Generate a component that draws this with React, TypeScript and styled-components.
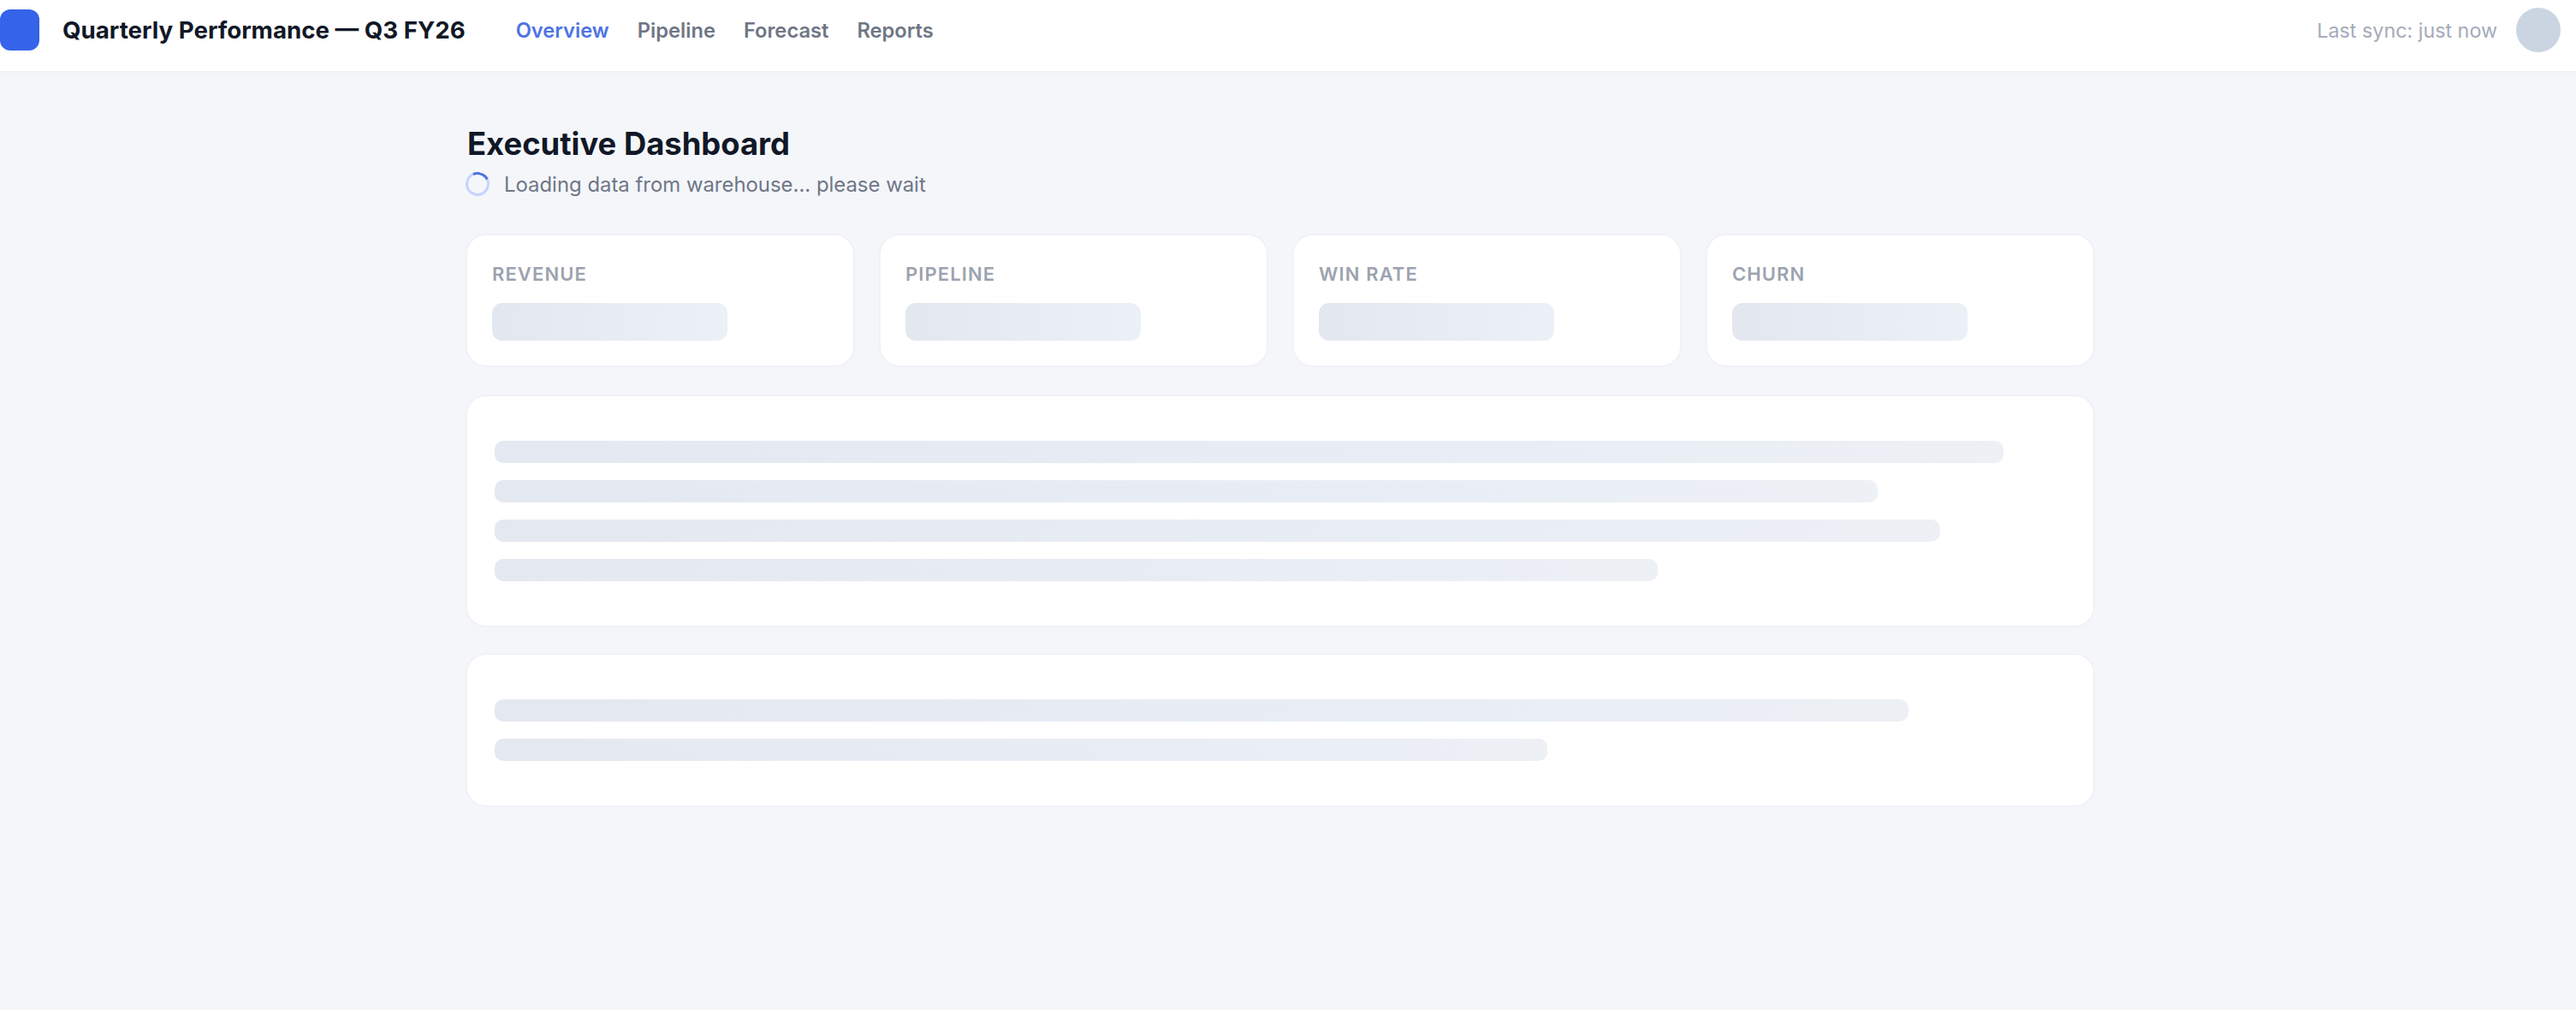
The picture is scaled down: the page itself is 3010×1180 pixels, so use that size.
import React from "react";
import styled, { createGlobalStyle } from "styled-components";

const Global = createGlobalStyle`
  html, body { margin: 0; padding: 0; background: #f4f6fa; }
  body { font-family: Inter, "Noto Sans", sans-serif; height: 1180px; overflow: hidden; }
`;

const Header = styled.header`
  display: flex;
  align-items: center;
  height: 83px;
  padding-right: 18px;
  background: #ffffff;
  border-bottom: 2px solid #f0f2f7;
`;

const Logo = styled.div`
  width: 46px;
  height: 48px;
  margin-top: -13px;
  border-radius: 12px;
  background: #3563e9;
  flex: none;
`;

const Title = styled.div`
  margin-left: 27px;
  margin-top: -13px;
  font-size: 27.7px;
  font-weight: 700;
  color: #111827;
  white-space: nowrap;
`;

const Nav = styled.nav`
  display: flex;
  gap: 33px;
  margin-left: 59px;
  margin-top: -13px;
`;

const NavLink = styled.span<{ $active?: boolean }>`
  font-size: 23.7px;
  font-weight: 600;
  color: ${(p) => (p.$active ? "#4f73e3" : "#6f7686")};
`;

const HeaderRight = styled.div`
  margin-left: auto;
  display: flex;
  align-items: center;
  gap: 22px;
  margin-top: -13px;
`;

const SyncText = styled.span`
  font-size: 23.3px;
  color: #a4abb9;
`;

const Avatar = styled.div`
  width: 52px;
  height: 52px;
  border-radius: 50%;
  background: #cbd5e1;
`;

const Main = styled.main`
  box-sizing: border-box;
  width: 1904px;
  margin-left: 544px;
  padding-top: 60px;
`;

const Heading = styled.h1`
  margin: 0 0 0 2px;
  font-size: 36.4px;
  line-height: 46px;
  font-weight: 700;
  color: #111827;
`;

const Status = styled.div`
  display: flex;
  align-items: center;
  gap: 17px;
  margin-top: 8px;
  height: 32px;
  font-size: 23.9px;
  color: #6f7686;
`;

const Spinner = styled.div`
  box-sizing: border-box;
  width: 28px;
  height: 28px;
  border-radius: 50%;
  border: 3px solid #c7d2fe;
  border-top-color: #4f73e3;
  transform: rotate(20deg);
`;

const Stats = styled.div`
  display: grid;
  grid-template-columns: repeat(4, 1fr);
  gap: 28px;
  margin-top: 42px;
`;

const Card = styled.section`
  box-sizing: border-box;
  background: #ffffff;
  border: 2px solid #f0f2f7;
  border-radius: 24px;
`;

const StatCard = styled(Card)`
  height: 156px;
  padding: 32px 29px 0;
`;

const StatLabel = styled.div`
  font-size: 22px;
  line-height: 26px;
  font-weight: 600;
  letter-spacing: 1.1px;
  color: #9ca3af;
`;

const StatBar = styled.div`
  width: 275px;
  height: 44px;
  margin-top: 21px;
  border-radius: 12px;
  background: linear-gradient(90deg, #e3e7ef, #ecf0f7);
`;

const Panel = styled(Card)<{ $gapTop: number }>`
  margin-top: ${(p) => p.$gapTop}px;
  padding: 52px 32px 52px;
  display: flex;
  flex-direction: column;
  gap: 20px;
`;

const Row = styled.div`
  height: 26px;
  border-radius: 10px;
  background: linear-gradient(90deg, #e4e8f0, #e9eef6 70%, #edf0f5);
`;

const stats = ["REVENUE", "PIPELINE", "WIN RATE", "CHURN"];
const navItems = ["Overview", "Pipeline", "Forecast", "Reports"];

export default function App() {
  return (
    <>
      <Global />
      <Header>
        <Logo />
        <Title>Quarterly Performance — Q3 FY26</Title>
        <Nav>
          {navItems.map((n, i) => (
            <NavLink key={n} $active={i === 0}>{n}</NavLink>
          ))}
        </Nav>
        <HeaderRight>
          <SyncText>Last sync: just now</SyncText>
          <Avatar />
        </HeaderRight>
      </Header>
      <Main>
        <Heading>Executive Dashboard</Heading>
        <Status>
          <Spinner />
          Loading data from warehouse... please wait
        </Status>
        <Stats>
          {stats.map((s) => (
            <StatCard key={s}>
              <StatLabel>{s}</StatLabel>
              <StatBar />
            </StatCard>
          ))}
        </Stats>
        <Panel $gapTop={32}>
          {[96, 88, 92, 74].map((w) => (
            <Row key={w} style={{ width: `${w}%` }} />
          ))}
        </Panel>
        <Panel $gapTop={30}>
          {[90, 67].map((w) => (
            <Row key={w} style={{ width: `${w}%` }} />
          ))}
        </Panel>
      </Main>
    </>
  );
}
